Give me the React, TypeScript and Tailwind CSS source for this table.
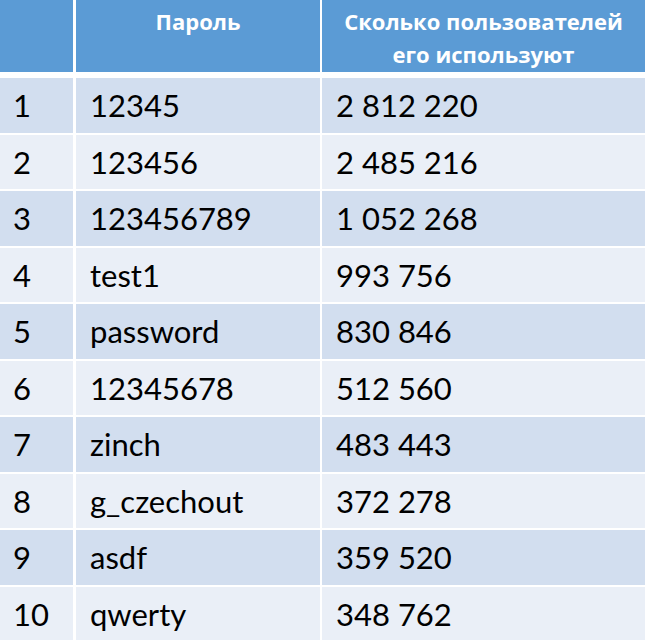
import React from "react";

const rows: [string, string, string][] = [
  ["1", "12345", "2 812 220"],
  ["2", "123456", "2 485 216"],
  ["3", "123456789", "1 052 268"],
  ["4", "test1", "993 756"],
  ["5", "password", "830 846"],
  ["6", "12345678", "512 560"],
  ["7", "zinch", "483 443"],
  ["8", "g_czechout", "372 278"],
  ["9", "asdf", "359 520"],
  ["10", "qwerty", "348 762"],
];

export default function App() {
  return (
    <div
      className="w-[645px] h-[640px] bg-white overflow-hidden flex flex-col"
      style={{ fontFamily: "Lato, 'Open Sans', sans-serif" }}
    >
      <div
        className="flex h-[72px] shrink-0 text-white font-bold text-[22px] leading-[33px] text-center"
        style={{ fontFamily: "'Open Sans', 'Noto Sans', sans-serif" }}
      >
        <div className="w-[73px] bg-[#5b9bd5]" />
        <div className="w-[244px] ml-[3px] bg-[#5b9bd5] pt-[5px]">Пароль</div>
        <div className="w-[323px] ml-[2px] bg-[#5b9bd5] pt-[5px]">
          Сколько пользователей
          <br />
          его используют
        </div>
      </div>
      <div className="flex flex-col gap-[2px] mt-[6px] text-[31px] text-black">
        {rows.map((r, i) => {
          const bg = i % 2 === 0 ? "bg-[#d2deef]" : "bg-[#eaeff7]";
          return (
            <div key={i} className="flex h-[54.5px] shrink-0">
              <div className={`w-[73px] ${bg} flex items-center pl-[13px]`}>{r[0]}</div>
              <div className={`w-[244px] ml-[3px] ${bg} flex items-center pl-[14px]`}>{r[1]}</div>
              <div className={`w-[323px] ml-[2px] ${bg} flex items-center pl-[14px]`}>{r[2]}</div>
            </div>
          );
        })}
      </div>
    </div>
  );
}
